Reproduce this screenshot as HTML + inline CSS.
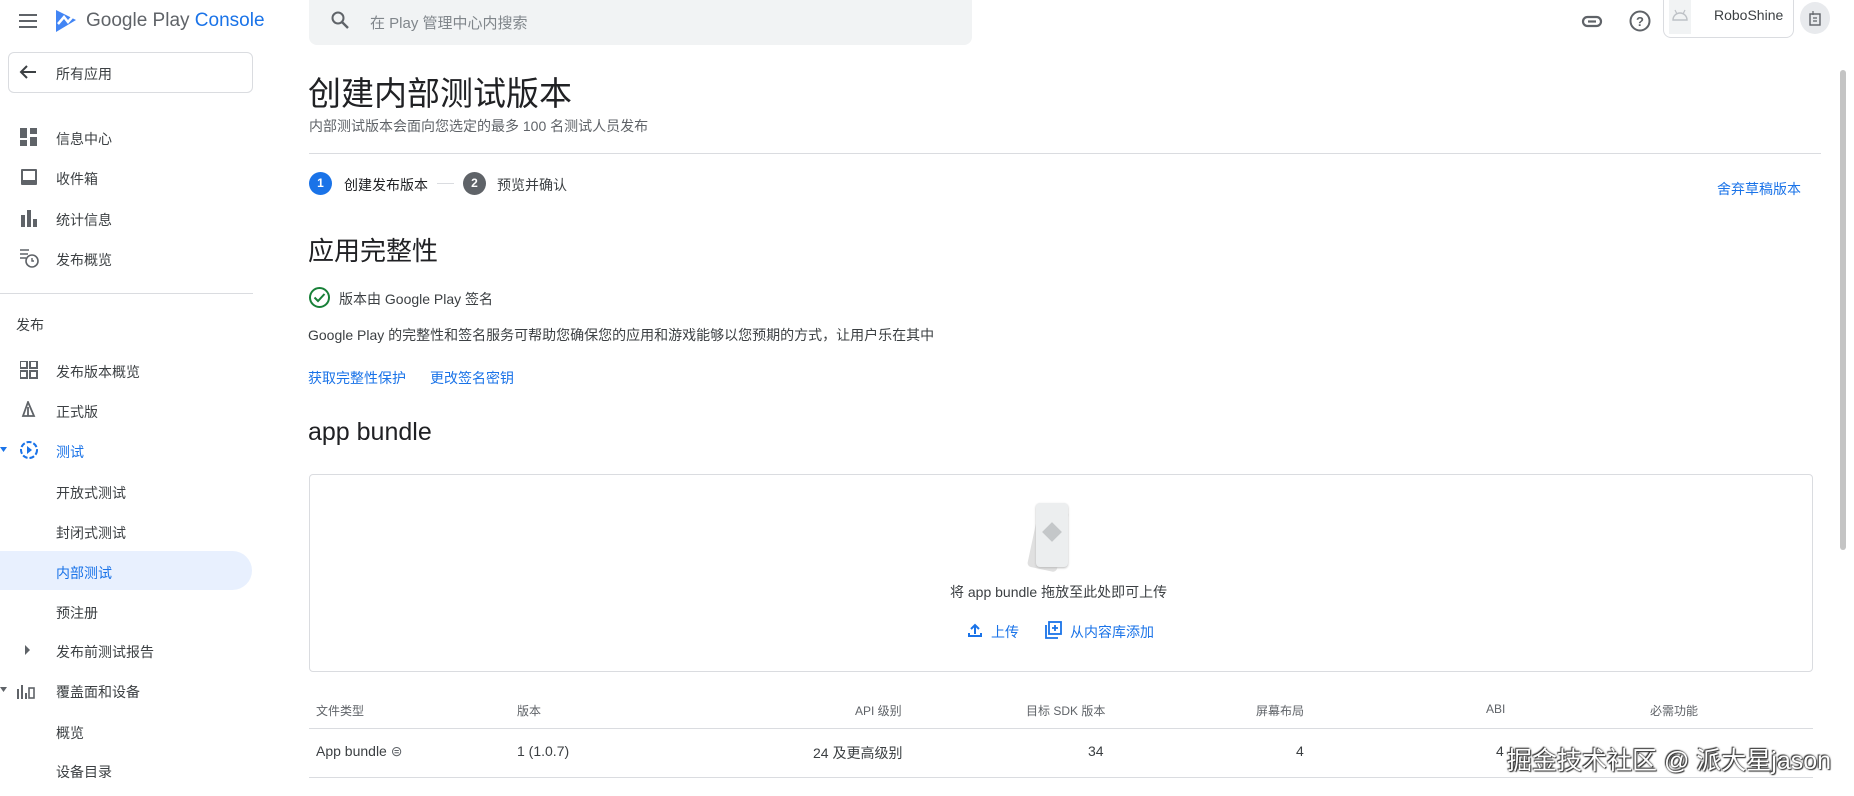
<!DOCTYPE html>
<html><head><meta charset="utf-8"><style>
*{box-sizing:border-box;margin:0;padding:0}
body{width:1854px;height:796px;overflow:hidden;background:#fff;font-family:"Liberation Sans","Noto Sans CJK SC",sans-serif;color:#202124;position:relative}
.a{position:absolute;white-space:nowrap}
.nav{font-size:14px;color:#3c4043;left:56px}
.ic{position:absolute;left:20px;width:20px;height:20px}
.blue{color:#1a73e8}
.th{font-size:12px;color:#5f6368;top:702px}
.td{font-size:14px;color:#3c4043;top:743px}
</style></head><body>
<svg class="a" style="left:18px;top:12px" width="22" height="18"><rect x="1" y="2" width="18" height="2" fill="#5f6368"/><rect x="1" y="8" width="18" height="2" fill="#5f6368"/><rect x="1" y="14" width="18" height="2" fill="#5f6368"/></svg>
<svg class="a" style="left:54px;top:8px" width="24" height="26"><path d="M2 2 L22 12 L2 24 Z" fill="#4285f4"/><path d="M4 16 L10 9 L14 14 L20 7" stroke="#fff" stroke-width="2.5" fill="none"/></svg>
<div class="a" style="left:86px;top:10px;font-size:19px;color:#5f6368">Google Play <span style="color:#1a73e8">Console</span></div>
<div class="a" style="left:309px;top:0;width:663px;height:45px;background:#f1f3f4;border-radius:0 0 8px 8px"></div>
<svg class="a" style="left:330px;top:10px" width="20" height="20"><circle cx="8" cy="8" r="5.5" stroke="#5f6368" stroke-width="2" fill="none"/><path d="M12 12 L18 18" stroke="#5f6368" stroke-width="2.4"/></svg>
<div class="a" style="left:370px;top:12px;font-size:15px;color:#80868b">在 Play 管理中心内搜索</div>
<svg class="a" style="left:1581px;top:11px" width="22" height="20"><rect x="2" y="6" width="18" height="9" rx="4.5" stroke="#5f6368" stroke-width="2.2" fill="none"/><path d="M7 10.5h8" stroke="#5f6368" stroke-width="2.2"/></svg>
<svg class="a" style="left:1628px;top:9px" width="24" height="24"><circle cx="12" cy="12" r="9.5" stroke="#5f6368" stroke-width="2" fill="none"/><text x="12" y="17" font-size="13" font-weight="bold" text-anchor="middle" fill="#5f6368" font-family="Liberation Sans">?</text></svg>
<div class="a" style="left:1663px;top:-2px;width:131px;height:40px;border:1px solid #dadce0;border-radius:0 0 8px 8px"></div>
<div class="a" style="left:1669px;top:0;width:22px;height:34px;background:#f1f3f4"></div>
<svg class="a" style="left:1671px;top:8px" width="18" height="14"><path d="M2 12 A7 7 0 0 1 16 12 Z" fill="none" stroke="#bdc1c6" stroke-width="1.4"/><path d="M4 2 L6 6 M14 2 L12 6" stroke="#bdc1c6" stroke-width="1.2"/></svg>
<div class="a" style="left:1714px;top:7px;font-size:14px;color:#3c4043">RoboShine</div>
<div class="a" style="left:1800px;top:2px;width:30px;height:32px;border-radius:50%;background:#e8eaed"></div>
<svg class="a" style="left:1808px;top:9px" width="14" height="18"><rect x="2" y="5" width="10" height="11" stroke="#5f6368" fill="none" stroke-width="1.4"/><path d="M5 2v4M5 9h4M5 12h4" stroke="#5f6368" stroke-width="1.2"/></svg>
<div class="a" style="left:1840px;top:70px;width:6px;height:480px;background:#c4c4c4;border-radius:3px"></div>
<div class="a" style="left:8px;top:52px;width:245px;height:41px;border:1px solid #dadce0;border-radius:6px"></div>
<svg class="a" style="left:18px;top:63px" width="20" height="18"><path d="M18 9H3M9 3 L3 9 L9 15" stroke="#3c4043" stroke-width="2" fill="none"/></svg>
<div class="a nav" style="top:64px;color:#3c4043">所有应用</div>
<svg class="ic" style="top:128px"><rect x="0" y="0" width="7" height="10" fill="#5f6368"/><rect x="10" y="0" width="7" height="6" fill="#5f6368"/><rect x="0" y="12" width="7" height="6" fill="#5f6368"/><rect x="10" y="9" width="7" height="9" fill="#5f6368"/></svg>
<div class="a nav" style="top:129px">信息中心</div>
<svg class="ic" style="top:168px"><rect x="1" y="1" width="16" height="16" rx="1" fill="#5f6368"/><rect x="3" y="3" width="12" height="9" fill="#fff"/></svg>
<div class="a nav" style="top:169px">收件箱</div>
<svg class="ic" style="top:209px"><rect x="1" y="6" width="4" height="12" fill="#5f6368"/><rect x="7" y="1" width="4" height="17" fill="#5f6368"/><rect x="13" y="10" width="4" height="8" fill="#5f6368"/></svg>
<div class="a nav" style="top:210px">统计信息</div>
<svg class="ic" style="top:248px"><path d="M0 2h9M0 6h8M0 10h6" stroke="#5f6368" stroke-width="1.6"/><circle cx="12" cy="13" r="6" stroke="#5f6368" stroke-width="1.6" fill="none"/><path d="M12 10v3h2" stroke="#5f6368" stroke-width="1.4" fill="none"/></svg>
<div class="a nav" style="top:250px">发布概览</div>
<div class="a" style="left:0;top:293px;width:253px;height:1px;background:#dadce0"></div>
<div class="a" style="left:16px;top:315px;font-size:14px;color:#3c4043">发布</div>
<svg class="ic" style="top:361px"><rect x="0" y="0" width="7" height="7" stroke="#5f6368" stroke-width="2" fill="none"/><rect x="10" y="0" width="7" height="7" stroke="#5f6368" stroke-width="2" fill="none"/><rect x="0" y="10" width="7" height="7" stroke="#5f6368" stroke-width="2" fill="none"/><rect x="10" y="10" width="7" height="7" stroke="#5f6368" stroke-width="2" fill="none"/></svg>
<div class="a nav" style="top:362px">发布版本概览</div>
<svg class="ic" style="top:401px"><path d="M8 1 L3 15 L14 15 Z" stroke="#5f6368" stroke-width="1.8" fill="none"/><path d="M8 6v9" stroke="#5f6368" stroke-width="1.8"/></svg>
<div class="a nav" style="top:402px">正式版</div>
<svg class="a" style="left:0;top:446px" width="8" height="8"><path d="M0 1h7L3.5 6z" fill="#1a73e8"/></svg>
<svg class="ic" style="top:440px"><circle cx="9" cy="10" r="8" stroke="#1a73e8" stroke-width="2" fill="none" stroke-dasharray="5 2"/><path d="M7 6 L12 10 L7 14 Z" fill="#1a73e8"/></svg>
<div class="a nav blue" style="top:442px;color:#1a73e8">测试</div>
<div class="a nav" style="top:483px">开放式测试</div>
<div class="a nav" style="top:523px">封闭式测试</div>
<div class="a" style="left:0;top:551px;width:252px;height:39px;background:#e8f0fe;border-radius:0 20px 20px 0"></div>
<div class="a nav" style="top:563px;color:#1a73e8">内部测试</div>
<div class="a nav" style="top:603px">预注册</div>
<svg class="a" style="left:24px;top:644px" width="8" height="12"><path d="M1 1 L6 6 L1 11Z" fill="#5f6368"/></svg>
<div class="a nav" style="top:642px">发布前测试报告</div>
<svg class="a" style="left:0;top:686px" width="8" height="8"><path d="M0 1h7L3.5 6z" fill="#5f6368"/></svg>
<svg class="ic" style="top:681px;left:16px"><path d="M2 8v10M6 4v14M10 12v6" stroke="#5f6368" stroke-width="2"/><rect x="13" y="7" width="5" height="10" stroke="#5f6368" stroke-width="1.6" fill="none"/></svg>
<div class="a nav" style="top:682px">覆盖面和设备</div>
<div class="a nav" style="top:723px">概览</div>
<div class="a nav" style="top:762px">设备目录</div>
<div class="a" style="left:308px;top:67px;font-size:33px;color:#202124">创建内部测试版本</div>
<div class="a" style="left:309px;top:116px;font-size:14px;color:#5f6368">内部测试版本会面向您选定的最多 100 名测试人员发布</div>
<div class="a" style="left:309px;top:153px;width:1512px;height:1px;background:#dadce0"></div>
<div class="a" style="left:309px;top:172px;width:23px;height:23px;border-radius:50%;background:#1a73e8;color:#fff;font-size:12px;text-align:center;line-height:23px;font-weight:bold">1</div>
<div class="a" style="left:344px;top:175px;font-size:14px;color:#202124">创建发布版本</div>
<div class="a" style="left:437px;top:183px;width:17px;height:1px;background:#dadce0"></div>
<div class="a" style="left:463px;top:172px;width:23px;height:23px;border-radius:50%;background:#5f6368;color:#fff;font-size:12px;text-align:center;line-height:23px;font-weight:bold">2</div>
<div class="a" style="left:497px;top:175px;font-size:14px;color:#3c4043">预览并确认</div>
<div class="a" style="left:1717px;top:179px;font-size:14px;color:#1a73e8">舍弃草稿版本</div>
<div class="a" style="left:308px;top:231px;font-size:26px;color:#202124">应用完整性</div>
<svg class="a" style="left:308px;top:286px" width="23" height="23"><circle cx="11.5" cy="11.5" r="9.5" stroke="#188038" stroke-width="2" fill="none"/><path d="M6.5 11.5 L10 15 L16.5 8" stroke="#188038" stroke-width="2" fill="none"/></svg>
<div class="a" style="left:339px;top:289px;font-size:14px;color:#3c4043">版本由 Google Play 签名</div>
<div class="a" style="left:308px;top:325px;font-size:14px;color:#3c4043">Google Play 的完整性和签名服务可帮助您确保您的应用和游戏能够以您预期的方式，让用户乐在其中</div>
<div class="a" style="left:308px;top:368px;font-size:14px;color:#1a73e8">获取完整性保护</div>
<div class="a" style="left:430px;top:368px;font-size:14px;color:#1a73e8">更改签名密钥</div>
<div class="a" style="left:308px;top:418px;font-size:25px;color:#202124">app bundle</div>
<div class="a" style="left:309px;top:474px;width:1504px;height:198px;border:1px solid #dadce0;border-radius:4px"></div>
<div class="a" style="left:1033px;top:508px;width:30px;height:62px;background:#e0e0e0;border-radius:4px;transform:rotate(12deg)"></div>
<div class="a" style="left:1036px;top:503px;width:32px;height:64px;background:#eceeef;border-radius:4px;box-shadow:0 1px 2px #bbb"></div>
<div class="a" style="left:1045px;top:525px;width:14px;height:14px;background:#c4c7c9;transform:rotate(45deg)"></div>
<div class="a" style="left:950px;top:582px;font-size:14px;color:#3c4043">将 app bundle 拖放至此处即可上传</div>
<svg class="a" style="left:967px;top:622px" width="16" height="16"><path d="M8 12V3M4 7 L8 3 L12 7M2 11v3h12v-3" stroke="#1a73e8" stroke-width="2" fill="none"/></svg>
<div class="a" style="left:991px;top:622px;font-size:14px;color:#1a73e8">上传</div>
<svg class="a" style="left:1045px;top:621px" width="17" height="18"><rect x="4" y="1" width="12" height="12" stroke="#1a73e8" stroke-width="1.8" fill="none"/><path d="M1 4v13h12M10 4v6M7 7h6" stroke="#1a73e8" stroke-width="1.8" fill="none"/></svg>
<div class="a" style="left:1070px;top:622px;font-size:14px;color:#1a73e8">从内容库添加</div>
<div class="a th" style="left:316px">文件类型</div>
<div class="a th" style="left:517px">版本</div>
<div class="a th" style="left:855px">API 级别</div>
<div class="a th" style="left:1026px">目标 SDK 版本</div>
<div class="a th" style="left:1256px">屏幕布局</div>
<div class="a th" style="left:1486px">ABI</div>
<div class="a th" style="left:1650px">必需功能</div>
<div class="a" style="left:309px;top:728px;width:1504px;height:1px;background:#dadce0"></div>
<div class="a td" style="left:316px">App bundle <span style="color:#5f6368">⊜</span></div>
<div class="a td" style="left:517px">1 (1.0.7)</div>
<div class="a td" style="left:813px">24 及更高级别</div>
<div class="a td" style="left:1088px">34</div>
<div class="a td" style="left:1296px">4</div>
<div class="a td" style="left:1496px">4</div>
<div class="a" style="left:309px;top:777px;width:1504px;height:1px;background:#dadce0"></div>
<div class="a" style="left:1507px;top:741px;font-size:25px;color:#fff;text-shadow:0 0 2px #333,1px 1px 1px #333,-1px -1px 1px #333">掘金技术社区 @ 派大星jason</div>
</body></html>
